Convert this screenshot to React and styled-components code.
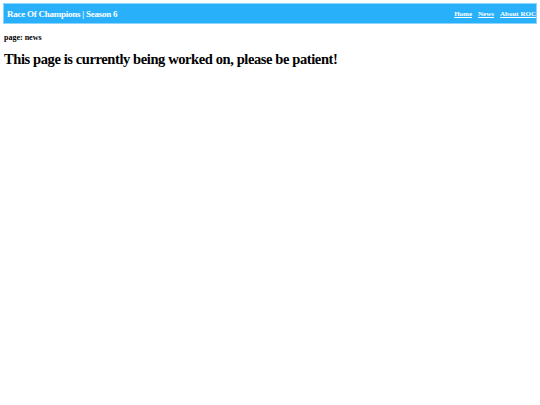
import styled, { createGlobalStyle } from 'styled-components';

const GlobalStyle = createGlobalStyle`
    body {
        margin: 3px;
        font-family: "Liberation Serif", "Times New Roman", serif;
        background: #ffffff;
        color: #000000;
    }
`
const Header = styled.header`
    display: flex;
    align-items: center;
    justify-content: space-between;
    height: 21px;
    box-sizing: border-box;
    background: #29b0fb;
    border: 1px solid #8fd4fc;
    padding: 0 0 0 3px;
`
const Brand = styled.span`
    color: #ffffff;
    font-size: 9px;
    font-weight: bold;
    letter-spacing: -0.25px;
    padding-top: 1px;
`
const Nav = styled.nav`
    display: flex;
    gap: 6px;
`
const NavLink = styled.a`
    color: #ffffff;
    font-size: 7px;
    font-weight: bold;
    text-decoration: underline;
`
const PageLabel = styled.p`
    font-size: 8px;
    font-weight: bold;
    margin: 9px 0 0 1px;
`
const Title = styled.h1`
    font-size: 14.5px;
    letter-spacing: -0.4px;
    margin: 9px 0 0 1px;
`

const App = () => {
    return (
        <>
            <GlobalStyle />
            <Header>
                <Brand>Race Of Champions | Season 6</Brand>
                <Nav>
                    <NavLink href="#">Home</NavLink>
                    <NavLink href="#">News</NavLink>
                    <NavLink href="#">About ROC</NavLink>
                </Nav>
            </Header>
            <PageLabel>page: news</PageLabel>
            <Title>This page is currently being worked on, please be patient!</Title>
        </>
    )
}

export default App;
